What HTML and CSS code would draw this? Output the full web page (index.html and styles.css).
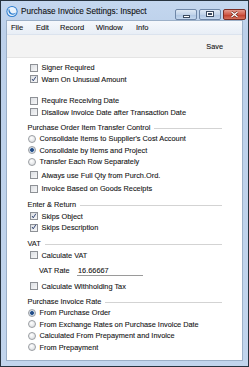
FILE: index.html
```html
<!DOCTYPE html>
<html lang="en">
<head>
    <meta charset="UTF-8">
    <title>Purchase Invoice Settings: Inspect</title>
    <link rel="stylesheet" href="styles.css">
</head>
<body>
    <div class="window">
        <div class="title-bar">
            <svg class="app-icon" width="12" height="13" viewBox="0 0 12 13">
                <circle cx="6" cy="6.5" r="5.6" fill="#2f7fd0"/>
                <circle cx="6" cy="6.5" r="4.6" fill="#e9f2fb"/>
                <path d="M3 3.5 C1.6 6 3 9.6 6.6 9.8 C8.6 9.9 9.6 8.6 10 7.6 C8.6 8.8 5.6 9 4.4 7 C3.6 5.8 3.6 4.6 3 3.5 Z" fill="#2f7fd0"/>
            </svg>
            <div class="title-text">Purchase Invoice Settings: Inspect</div>
            <div class="win-buttons">
                <div class="win-btn min"><span class="min-glyph"></span></div>
                <div class="win-btn max"><span class="max-glyph"></span></div>
                <div class="win-btn close">
                    <svg width="9" height="7" viewBox="0 0 9 7">
                        <path d="M1.5 1 L7.5 6 M7.5 1 L1.5 6" stroke="#6b2219" stroke-width="2.4"/>
                        <path d="M1.5 1 L7.5 6 M7.5 1 L1.5 6" stroke="#ffffff" stroke-width="1.3"/>
                    </svg>
                </div>
            </div>
        </div>

        <div class="client">
            <div class="menu-bar">
                <span class="menu-item">File</span>
                <span class="menu-item">Edit</span>
                <span class="menu-item">Record</span>
                <span class="menu-item">Window</span>
                <span class="menu-item">Info</span>
            </div>

            <div class="toolbar">
                <span class="tool-btn">Save</span>
            </div>

            <div class="content">
                <div class="row check-row">
                    <span class="box"></span>
                    <span class="label">Signer Required</span>
                </div>
                <div class="row check-row">
                    <span class="box checked"><svg width="8" height="8" viewBox="0 0 8 8"><path d="M1.4 4 L3 6.4 L6.6 0.8" fill="none" stroke="#22386a" stroke-width="1.2"/></svg></span>
                    <span class="label">Warn On Unusual Amount</span>
                </div>

                <div class="row check-row gap-lg">
                    <span class="box"></span>
                    <span class="label">Require Receiving Date</span>
                </div>
                <div class="row check-row">
                    <span class="box"></span>
                    <span class="label">Disallow Invoice Date after Transaction Date</span>
                </div>

                <div class="row section gap-sm">
                    <span class="section-title">Purchase Order Item Transfer Control</span>
                    <span class="section-line"></span>
                </div>
                <div class="row radio-row">
                    <span class="radio"></span>
                    <span class="label">Consolidate Items to Supplier's Cost Account</span>
                </div>
                <div class="row radio-row">
                    <span class="radio selected"></span>
                    <span class="label">Consolidate by Items and Project</span>
                </div>
                <div class="row radio-row">
                    <span class="radio"></span>
                    <span class="label">Transfer Each Row Separately</span>
                </div>
                <div class="row check-row gap-xs">
                    <span class="box"></span>
                    <span class="label">Always use Full Qty from Purch.Ord.</span>
                </div>
                <div class="row check-row gap-xs">
                    <span class="box"></span>
                    <span class="label">Invoice Based on Goods Receipts</span>
                </div>

                <div class="row section gap-md">
                    <span class="section-title">Enter &amp; Return</span>
                    <span class="section-line"></span>
                </div>
                <div class="row check-row">
                    <span class="box checked"><svg width="8" height="8" viewBox="0 0 8 8"><path d="M1.4 4 L3 6.4 L6.6 0.8" fill="none" stroke="#22386a" stroke-width="1.2"/></svg></span>
                    <span class="label">Skips Object</span>
                </div>
                <div class="row check-row">
                    <span class="box checked"><svg width="8" height="8" viewBox="0 0 8 8"><path d="M1.4 4 L3 6.4 L6.6 0.8" fill="none" stroke="#22386a" stroke-width="1.2"/></svg></span>
                    <span class="label">Skips Description</span>
                </div>

                <div class="row section gap-md">
                    <span class="section-title">VAT</span>
                    <span class="section-line"></span>
                </div>
                <div class="row check-row">
                    <span class="box"></span>
                    <span class="label">Calculate VAT</span>
                </div>
                <div class="row field-row gap-sm">
                    <span class="field-label">VAT Rate</span>
                    <span class="field">16.66667</span>
                </div>
                <div class="row check-row gap-sm">
                    <span class="box"></span>
                    <span class="label">Calculate Withholding Tax</span>
                </div>

                <div class="row section gap-sm">
                    <span class="section-title">Purchase Invoice Rate</span>
                    <span class="section-line"></span>
                </div>
                <div class="row radio-row">
                    <span class="radio selected"></span>
                    <span class="label">From Purchase Order</span>
                </div>
                <div class="row radio-row">
                    <span class="radio"></span>
                    <span class="label">From Exchange Rates on Purchase Invoice Date</span>
                </div>
                <div class="row radio-row">
                    <span class="radio"></span>
                    <span class="label">Calculated From Prepayment and Invoice</span>
                </div>
                <div class="row radio-row">
                    <span class="radio"></span>
                    <span class="label">From Prepayment</span>
                </div>
            </div>
        </div>
    </div>
</body>
</html>
```

FILE: styles.css
```css
* {
    margin: 0;
    padding: 0;
    box-sizing: border-box;
}

body {
    width: 249px;
    height: 367px;
    overflow: hidden;
    background: #ffffff;
    font-family: "Liberation Sans", Arial, sans-serif;
    color: #151515;
    -webkit-text-stroke: 0.1px #151515;
}

.window {
    width: 249px;
    height: 367px;
    border: 1px solid #27333f;
    background: linear-gradient(#c4d7ef, #bcd0ea 30px, #c2d5ed);
    display: flex;
    flex-direction: column;
    padding: 0 5px 5px 5px;
}

/* Title bar */
.title-bar {
    height: 19px;
    display: flex;
    align-items: center;
}

.app-icon {
    margin-top: 1px;
}

.title-text {
    margin-left: 3px;
    margin-top: 2px;
    font-size: 8.2px;
    color: #111;
}

.win-buttons {
    margin-left: auto;
    margin-right: -3px;
    margin-top: 7px;
    display: flex;
    gap: 2px;
}

.win-btn {
    height: 11px;
    border: 1px solid #6f87a8;
    border-radius: 2px;
    display: flex;
    align-items: center;
    justify-content: center;
}

.win-btn.min,
.win-btn.max {
    width: 22px;
    background: linear-gradient(#dde8f5, #c2d4ea 50%, #adc4e1 51%, #c4d7ee);
}

.win-btn.close {
    width: 23px;
    border-color: #7b2c24;
    background: linear-gradient(#e59a8e, #d05a49 50%, #bd3a2a 51%, #d6705c);
}

.min-glyph {
    width: 7px;
    height: 3px;
    margin-top: 4px;
    background: #fff;
    border: 1px solid #3a4a60;
}

.max-glyph {
    width: 8px;
    height: 6px;
    border: 1px solid #3a4a60;
    background: #fff;
    box-shadow: inset 0 0 0 1px #fff, inset 0 0 0 2px #3a4a60;
}

/* Client area */
.client {
    flex: 1;
    display: flex;
    flex-direction: column;
    border: 1px solid #9cb0c8;
    background: #ffffff;
}

.menu-bar {
    height: 14px;
    display: flex;
    align-items: center;
    background: linear-gradient(#f5f8fc, #e8eef6);
    border-bottom: 1px solid #dbe3ee;
    font-size: 7.5px;
}

.menu-item {
    padding-left: 3px;
}

.menu-item:nth-child(1) { margin-left: 1px; width: 25px; }
.menu-item:nth-child(2) { width: 24px; }
.menu-item:nth-child(3) { width: 36px; }
.menu-item:nth-child(4) { width: 40px; }

.toolbar {
    height: 23px;
    display: flex;
    align-items: center;
    justify-content: flex-end;
    padding-right: 19px;
    background: #f3f3f3;
    border-bottom: 1px solid #e4e4e4;
}

.tool-btn {
    font-size: 7.3px;
}

/* Form content */
.content {
    flex: 1;
    padding: 4px 20px 0 20px;
    display: flex;
    flex-direction: column;
    font-size: 7.35px;
}

.row {
    height: 11.4px;
    display: flex;
    align-items: center;
    flex-shrink: 0;
}

.gap-xs { margin-top: 2.2px; }
.gap-sm { margin-top: 4px; }
.gap-md { margin-top: 4.8px; }
.gap-lg { margin-top: 10.2px; }

.check-row {
    padding-left: 3px;
}

.radio-row {
    padding-left: 1px;
}

.box {
    width: 8px;
    height: 8px;
    border: 1px solid #8e9196;
    background: linear-gradient(135deg, #dcdfe3, #f7f7f8);
    display: flex;
    align-items: center;
    justify-content: center;
    flex-shrink: 0;
}

.box svg {
    margin-top: -1px;
}

.radio {
    width: 8px;
    height: 8px;
    border: 1px solid #9a9da2;
    border-radius: 50%;
    background: radial-gradient(circle at 40% 35%, #ffffff, #d4d7db);
    flex-shrink: 0;
}

.radio.selected {
    background: radial-gradient(circle, #1f3f72 0, #2d5a96 1.6px, #c8d3e0 2.2px, #eef1f5);
}

.check-row .label,
.radio-row .label {
    margin-left: 3.5px;
}

.label {
    white-space: nowrap;
}

.section-title {
    white-space: nowrap;
    padding-left: 0.5px;
}

.section-line {
    flex: 1;
    height: 1px;
    background: #d3d3d3;
    margin-left: 4px;
    margin-top: 2px;
}

.field-row {
    padding-left: 12px;
}

.field-label {
    width: 38px;
}

.field {
    width: 66px;
    padding-left: 1px;
    border-bottom: 1px solid #9a9a9a;
    line-height: 9px;
}
```
